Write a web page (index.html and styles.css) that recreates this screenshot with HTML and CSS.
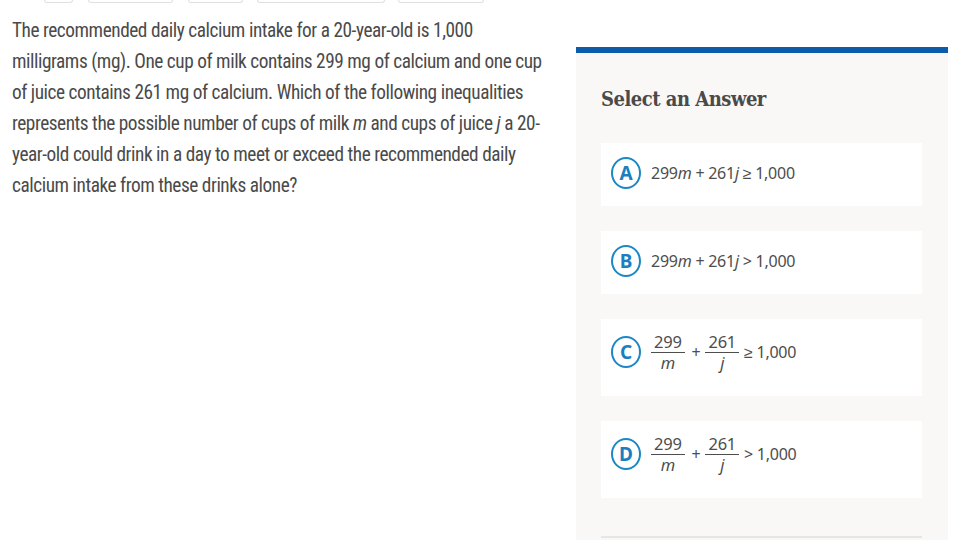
FILE: index.html
```html
<!DOCTYPE html>
<html lang="en">
<head>
<meta charset="utf-8">
<title>Question</title>
<link rel="stylesheet" href="styles.css">
</head>
<body>
<div class="page">
  <main class="question-col">
    <div class="toolbar">
      <span class="tb tb1"></span>
      <span class="tb tb2"></span>
      <span class="tb tb3"></span>
      <span class="tb tb4"></span>
      <span class="tb tb5"></span>
    </div>
    <p class="question">The recommended daily calcium intake for a 20-year-old is 1,000<br>milligrams (mg). One cup of milk contains 299 mg of calcium and one cup<br>of juice contains 261 mg of calcium. Which of the following inequalities<br>represents the possible number of cups of milk <i class="var">m</i> and cups of juice <i class="var">j</i> a 20-<br>year-old could drink in a day to meet or exceed the recommended daily<br>calcium intake from these drinks alone?</p>
  </main>
  <aside class="answers">
    <h2 class="answers-title">Select an Answer</h2>
    <div class="card">
      <span class="letter">A</span>
      <span class="math">299<i>m</i> + 261<i>j</i> ≥ 1,000</span>
    </div>
    <div class="card">
      <span class="letter">B</span>
      <span class="math">299<i>m</i> + 261<i>j</i> &gt; 1,000</span>
    </div>
    <div class="card card-frac">
      <span class="letter">C</span>
      <span class="math">
        <span class="frac"><span class="num">299</span><span class="den"><i>m</i></span></span>
        <span class="op">+</span>
        <span class="frac"><span class="num">261</span><span class="den"><i>j</i></span></span>
        <span class="rel">≥ 1,000</span>
      </span>
    </div>
    <div class="card card-frac">
      <span class="letter">D</span>
      <span class="math">
        <span class="frac"><span class="num">299</span><span class="den"><i>m</i></span></span>
        <span class="op">+</span>
        <span class="frac"><span class="num">261</span><span class="den"><i>j</i></span></span>
        <span class="rel">&gt; 1,000</span>
      </span>
    </div>
    <div class="divider"></div>
  </aside>
</div>
</body>
</html>
```
FILE: styles.css
```css
html, body {
  margin: 0;
  padding: 0;
  background: #ffffff;
}
.page {
  display: flex;
  width: 960px;
  height: 540px;
  overflow: hidden;
}
.question-col {
  width: 576px;
  flex: none;
}
.toolbar {
  display: flex;
  padding-left: 44px;
  gap: 15px;
  height: 3px;
}
.tb {
  height: 2px;
  border: 1px solid #e2e0dc;
  border-top: none;
  border-radius: 0 0 4px 4px;
}
.tb1 { width: 27px; }
.tb2 { width: 83px; }
.tb3 { width: 53px; }
.tb4 { width: 126px; margin-left: -1px; }
.tb5 { width: 84px; margin-left: -2px; }
.question {
  margin: 12px 0 0 12px;
  font-family: Roboto, "Noto Sans", sans-serif;
  font-stretch: 75%;
  font-size: 19.3px;
  letter-spacing: -0.45px;
  line-height: 31px;
  white-space: nowrap;
  color: #4a4a4a;
}
.var {
  font-style: italic;
}
.answers {
  width: 372px;
  flex: none;
  margin-top: 47px;
  border-top: 6px solid #0b5cab;
  background: #f9f8f6;
  padding: 0 26px 0 25px;
  box-sizing: border-box;
  display: flex;
  flex-direction: column;
}
.answers-title {
  margin: 32px 0 30px;
  font-family: "DejaVu Serif", serif;
  font-stretch: condensed;
  font-weight: bold;
  font-size: 20px;
  letter-spacing: -0.5px;
  line-height: 28px;
  color: #4a4a4a;
}
.card {
  background: #ffffff;
  display: flex;
  align-items: center;
  padding: 14px 10px 17px;
  margin-bottom: 25px;
  gap: 10px;
}
.card-frac {
  padding: 12px 10px 23px;
}
.letter {
  width: 26px;
  height: 28px;
  border: 2.5px solid #1b87c3;
  border-radius: 50%;
  display: flex;
  align-items: center;
  justify-content: center;
  font-family: "Noto Sans", sans-serif;
  font-stretch: condensed;
  font-weight: bold;
  font-size: 19px;
  color: #1b7fbf;
  flex: none;
}
.math {
  display: flex;
  align-items: center;
  font-family: "Noto Sans", sans-serif;
  font-size: 16px;
  letter-spacing: -0.25px;
  color: #4d4d4d;
  white-space: pre;
}
.frac {
  display: inline-flex;
  flex-direction: column;
  align-items: stretch;
  text-align: center;
  font-size: 16.5px;
}
.num {
  line-height: 21px;
  padding: 0 3px;
  border-bottom: 1px solid #4d4d4d;
}
.den {
  line-height: 20px;
}
.op {
  margin: 0 5px 0 7px;
}
.rel {
  margin-left: 5px;
}
.divider {
  margin-top: auto;
  margin-bottom: 2px;
  height: 2px;
  background: #e8e6e2;
}
```
